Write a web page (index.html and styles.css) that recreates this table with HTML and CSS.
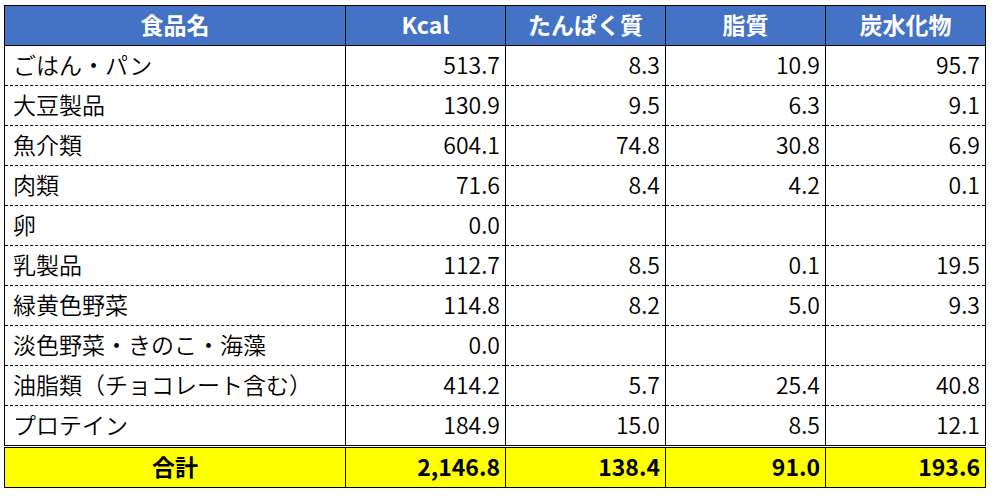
FILE: index.html
```html
<!DOCTYPE html>
<html lang="ja">
<head>
<meta charset="utf-8">
<link rel="stylesheet" href="styles.css">
</head>
<body>
<table class="nutri">
  <colgroup>
    <col class="c-name"><col class="c-num"><col class="c-num"><col class="c-num"><col class="c-num">
  </colgroup>
  <thead>
    <tr><th>食品名</th><th>Kcal</th><th>たんぱく質</th><th>脂質</th><th>炭水化物</th></tr>
  </thead>
  <tbody>
    <tr><td>ごはん・パン</td><td class="n">513.7</td><td class="n">8.3</td><td class="n">10.9</td><td class="n">95.7</td></tr>
    <tr><td>大豆製品</td><td class="n">130.9</td><td class="n">9.5</td><td class="n">6.3</td><td class="n">9.1</td></tr>
    <tr><td>魚介類</td><td class="n">604.1</td><td class="n">74.8</td><td class="n">30.8</td><td class="n">6.9</td></tr>
    <tr><td>肉類</td><td class="n">71.6</td><td class="n">8.4</td><td class="n">4.2</td><td class="n">0.1</td></tr>
    <tr><td>卵</td><td class="n">0.0</td><td class="n"></td><td class="n"></td><td class="n"></td></tr>
    <tr><td>乳製品</td><td class="n">112.7</td><td class="n">8.5</td><td class="n">0.1</td><td class="n">19.5</td></tr>
    <tr><td>緑黄色野菜</td><td class="n">114.8</td><td class="n">8.2</td><td class="n">5.0</td><td class="n">9.3</td></tr>
    <tr><td>淡色野菜・きのこ・海藻</td><td class="n">0.0</td><td class="n"></td><td class="n"></td><td class="n"></td></tr>
    <tr><td>油脂類（チョコレート含む）</td><td class="n">414.2</td><td class="n">5.7</td><td class="n">25.4</td><td class="n">40.8</td></tr>
    <tr><td>プロテイン</td><td class="n">184.9</td><td class="n">15.0</td><td class="n">8.5</td><td class="n">12.1</td></tr>
  </tbody>
  <tfoot>
    <tr><td class="total-label">合計</td><td class="n">2,146.8</td><td class="n">138.4</td><td class="n">91.0</td><td class="n">193.6</td></tr>
  </tfoot>
</table>
</body>
</html>
```
FILE: styles.css
```css
html, body {
  margin: 0;
  padding: 0;
  background: #ffffff;
}
body {
  padding: 5px 0 0 4px;
  font-family: "Noto Sans CJK JP", "Noto Sans", sans-serif;
  color: #000;
}
.nutri {
  border-collapse: collapse;
  table-layout: fixed;
  width: 982px;
  font-size: 23px;
}
.c-name { width: 341px; }
.c-num { width: 160px; }
.nutri th,
.nutri td {
  border-left: 1px solid #000;
  border-right: 1px solid #000;
  padding: 0 5px 3px 8px;
  white-space: nowrap;
  overflow: hidden;
  line-height: 1;
}
.nutri thead th {
  background: #4472c4;
  color: #fff;
  font-weight: 700;
  height: 36px;
  border-top: 1px solid #000;
  border-bottom: 1px solid #000;
  text-align: center;
  padding: 0 0 3px 0;
}
.nutri tbody td {
  height: 36px;
  font-weight: 350;
  border-bottom: 1px dashed #000;
}
.nutri tbody tr:last-child td {
  border-bottom: none;
}
.nutri .n {
  text-align: right;
}
.nutri tfoot td {
  background: #ffff00;
  font-weight: 700;
  height: 36px;
  border-top: 3px double #000;
  border-bottom: 1px solid #000;
}
.nutri tfoot .total-label {
  text-align: center;
  padding: 0 0 3px 0;
}
```
